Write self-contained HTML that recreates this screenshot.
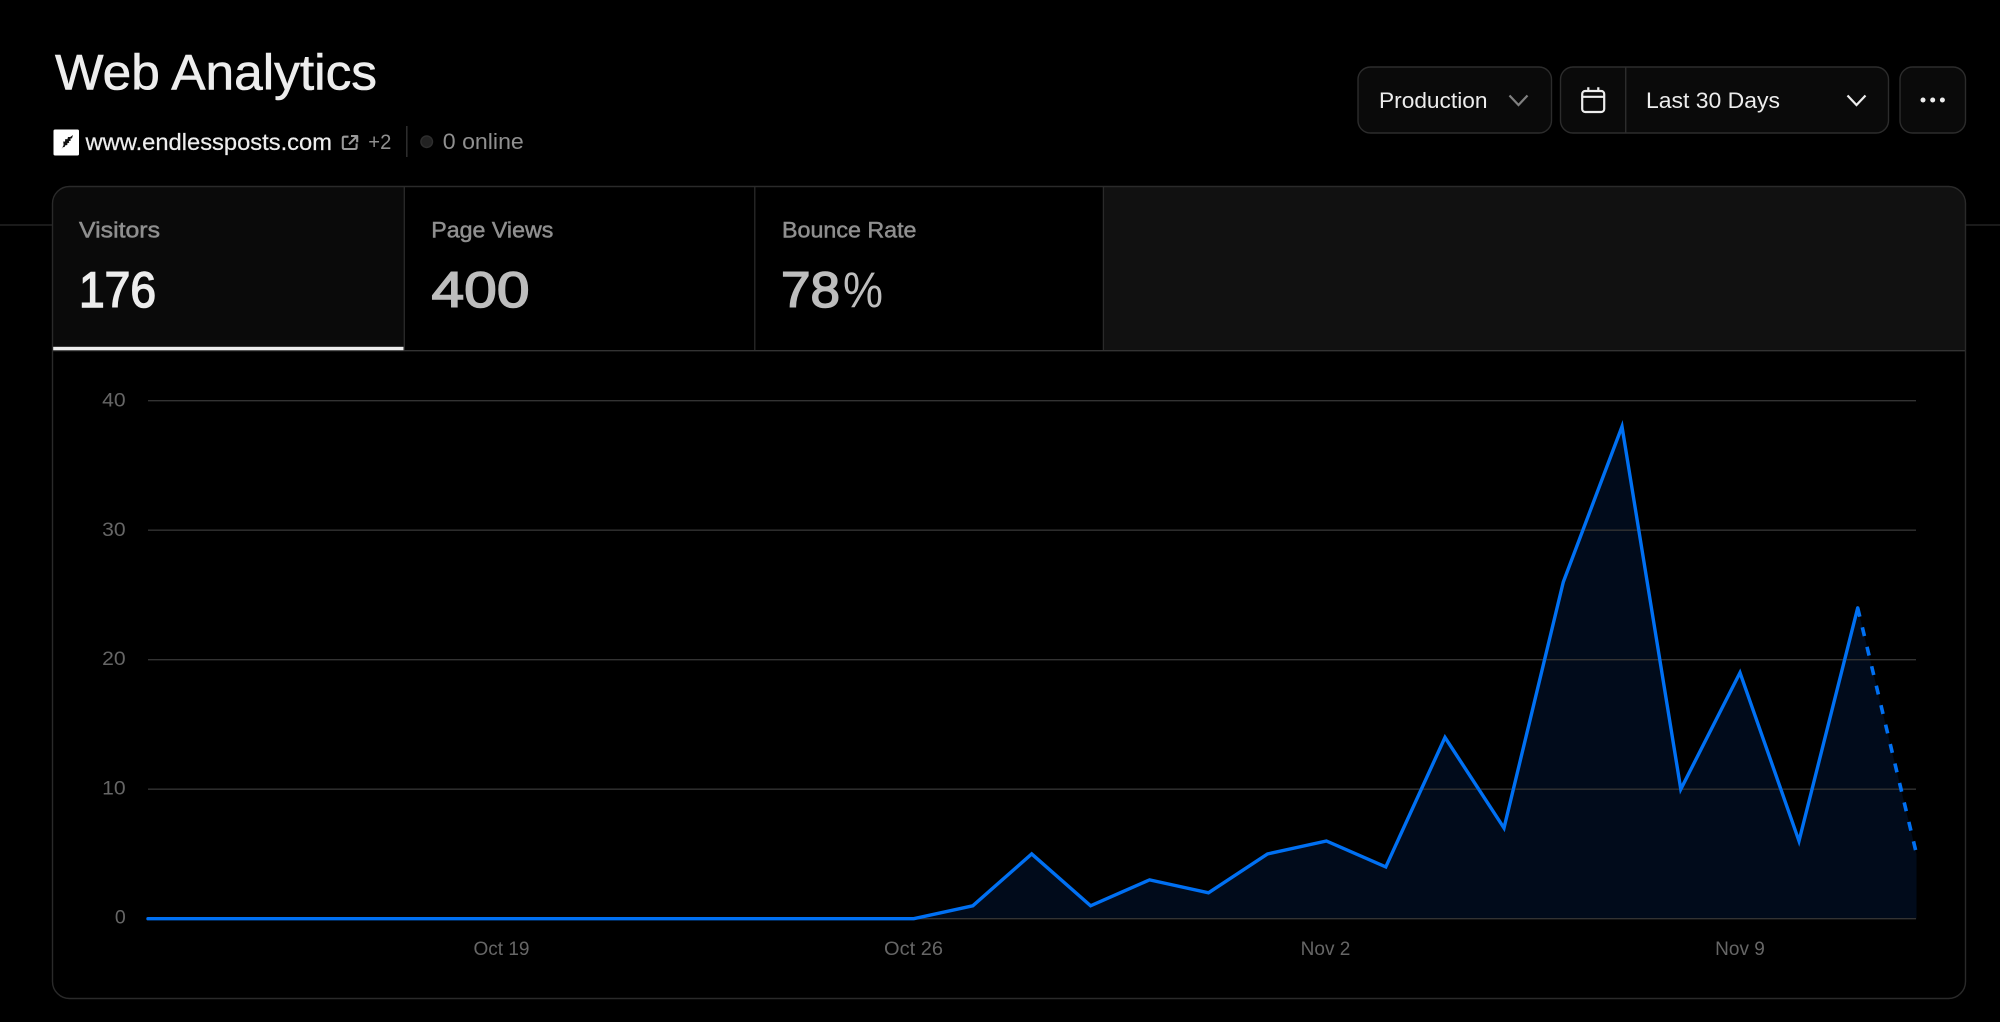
<!DOCTYPE html>
<html lang="en">
<head>
<meta charset="utf-8">
<title>Web Analytics</title>
<style>
html,body{margin:0;padding:0;background:#000;width:2000px;height:1022px;overflow:hidden}
svg{display:block}
text{font-family:"Liberation Sans",sans-serif}
</style>
</head>
<body>
<svg width="2000" height="1022" viewBox="0 0 2000 1022" xmlns="http://www.w3.org/2000/svg">
  <defs>
    <clipPath id="card"><rect x="52.5" y="186.5" width="1913" height="812" rx="17"/></clipPath>
  </defs>
  <rect width="2000" height="1022" fill="#000"/>

  <!-- header rule -->
  <line x1="0" y1="225" x2="2000" y2="225" stroke="#2a2a2a" stroke-width="1.3"/>

  <!-- title -->
  <text x="55" y="89.3" font-size="50" fill="#ededed" stroke="#ededed" stroke-width="0.6" textLength="322" lengthAdjust="spacingAndGlyphs">Web Analytics</text>

  <!-- favicon -->
  <rect x="53.5" y="129.5" width="25.5" height="26" rx="1.5" fill="#fff"/>
  <path d="M61.5 149.3 L63.6 145 L63.2 141.5 L65 141.6 L65.3 139 L67.4 139.3 L68 137 L70.2 137 L73 135 L72 138.2 L70.2 138.8 L71 140.4 L68.8 141.2 L69.3 142.8 L67.2 143.4 L67.4 145 L65.2 145.4 L64.6 147 L62.8 147.2 Z" fill="#111"/>

  <!-- domain -->
  <text x="85.5" y="150" font-size="23.5" fill="#ededed" stroke="#ededed" stroke-width="0.2" textLength="246.5" lengthAdjust="spacingAndGlyphs">www.endlessposts.com</text>
  <g fill="none" stroke="#999" stroke-width="2.1" stroke-linejoin="round">
    <path d="M348.5 136.7 H344.4 Q342.8 136.7 342.8 138.3 V147.4 Q342.8 149 344.4 149 H355 Q356.6 149 356.6 147.4 V143.5"/>
    <path d="M351 136 H357.2 V142.2 M357 136.2 L349 144.2"/>
  </g>
  <text x="368.3" y="149" font-size="21" fill="#8f8f8f" textLength="23" lengthAdjust="spacingAndGlyphs">+2</text>
  <line x1="406.8" y1="126" x2="406.8" y2="157" stroke="#2e2e2e" stroke-width="1.5"/>
  <circle cx="426.7" cy="141.7" r="5.8" fill="#222" stroke="#2e2e2e" stroke-width="1.4"/>
  <text x="442.8" y="149" font-size="22" fill="#8f8f8f" textLength="81" lengthAdjust="spacingAndGlyphs">0 online</text>

  <!-- Production select -->
  <rect x="1358" y="67" width="193.5" height="66" rx="12.5" fill="#0a0a0a" stroke="#2c2c2c" stroke-width="1.4"/>
  <text x="1379" y="108" font-size="22.5" fill="#ededed" textLength="108.5" lengthAdjust="spacingAndGlyphs">Production</text>
  <path d="M1509.5 95.5 L1518.5 105 L1527.5 95.5" fill="none" stroke="#808080" stroke-width="2.2"/>

  <!-- Date select -->
  <rect x="1560.5" y="67" width="328" height="66" rx="12.5" fill="#0a0a0a" stroke="#2c2c2c" stroke-width="1.4"/>
  <line x1="1625.7" y1="67.5" x2="1625.7" y2="132.5" stroke="#2c2c2c" stroke-width="1.4"/>
  <g fill="none" stroke="#ededed" stroke-width="2.2">
    <rect x="1582.2" y="91" width="22" height="21" rx="3"/>
    <path d="M1582.2 96.8 H1604.2 M1588.3 87.3 V91 M1598.3 87.3 V91"/>
  </g>
  <text x="1646" y="108" font-size="22.5" fill="#ededed" textLength="134" lengthAdjust="spacingAndGlyphs">Last 30 Days</text>
  <path d="M1847.5 95.5 L1856.5 105 L1865.5 95.5" fill="none" stroke="#ededed" stroke-width="2.2"/>

  <!-- More -->
  <rect x="1900" y="67" width="65.5" height="66" rx="12.5" fill="#0a0a0a" stroke="#2c2c2c" stroke-width="1.4"/>
  <circle cx="1923" cy="100" r="2.5" fill="#ededed"/>
  <circle cx="1932.7" cy="100" r="2.5" fill="#ededed"/>
  <circle cx="1942.4" cy="100" r="2.5" fill="#ededed"/>

  <!-- Card -->
  <rect x="52.5" y="186.5" width="1913" height="812" rx="17" fill="#000"/>
  <g clip-path="url(#card)">
    <rect x="52" y="186" width="352" height="165" fill="#0a0a0a"/>
    <rect x="1103.5" y="186" width="863" height="165" fill="#111"/>
    <line x1="404.3" y1="186" x2="404.3" y2="350" stroke="#2a2a2a" stroke-width="1.3"/>
    <line x1="754.8" y1="186" x2="754.8" y2="350" stroke="#2a2a2a" stroke-width="1.3"/>
    <line x1="1103.4" y1="186" x2="1103.4" y2="350" stroke="#2a2a2a" stroke-width="1.3"/>
    <line x1="52" y1="350.7" x2="1966" y2="350.7" stroke="#333" stroke-width="1.4"/>
    <rect x="53" y="346.8" width="350.5" height="3.4" fill="#ededed"/>
  </g>
  <rect x="52.5" y="186.5" width="1913" height="812" rx="17" fill="none" stroke="#2a2a2a" stroke-width="1.4"/>

  <!-- Tabs -->
  <g font-size="22.5" fill="#8f8f8f" stroke="#8f8f8f" stroke-width="0.5">
    <text x="79" y="237.7" textLength="81" lengthAdjust="spacingAndGlyphs">Visitors</text>
    <text x="431.3" y="237.7" textLength="122" lengthAdjust="spacingAndGlyphs">Page Views</text>
    <text x="782" y="237.7" textLength="134.5" lengthAdjust="spacingAndGlyphs">Bounce Rate</text>
  </g>
  <g font-size="50" stroke-width="1.5">
    <text x="79" y="306.8" fill="#ededed" stroke="#ededed" textLength="77" lengthAdjust="spacingAndGlyphs">176</text>
    <text x="431.5" y="306.8" fill="#bdbdbd" stroke="#bdbdbd" textLength="98" lengthAdjust="spacingAndGlyphs">400</text>
    <text x="781" y="306.8" fill="#bdbdbd" stroke="#bdbdbd" textLength="59" lengthAdjust="spacingAndGlyphs">78</text>
  </g>
  <text x="843" y="306.8" font-size="50" fill="#bdbdbd" textLength="40" lengthAdjust="spacingAndGlyphs">%</text>

  <!-- Area -->
  <path d="M913.8 918.7 L972.8 905.75 L1031.7 853.95 L1090.6 905.75 L1149.6 879.85 L1208.5 892.8 L1267.5 853.95 L1326.4 841 L1385.8 866.9 L1445 737.4 L1504 828.05 L1563.3 582 L1622 426.6 L1680.8 789.2 L1740 672.65 L1799 841 L1857.7 607.9 L1916.5 853.95 L1916.5 918.7 Z" fill="#010b1b"/>

  <!-- Grid -->
  <g stroke="#333" stroke-width="1.3">
    <line x1="148" y1="400.7" x2="1916" y2="400.7"/>
    <line x1="148" y1="530.2" x2="1916" y2="530.2"/>
    <line x1="148" y1="659.7" x2="1916" y2="659.7"/>
    <line x1="148" y1="789.2" x2="1916" y2="789.2"/>
    <line x1="148" y1="918.7" x2="1916" y2="918.7"/>
  </g>

  <!-- Axis labels -->
  <g font-size="19.5" fill="#666" text-anchor="end">
    <text x="125.7" y="406.7" textLength="23.5" lengthAdjust="spacingAndGlyphs">40</text>
    <text x="125.7" y="535.8" textLength="23.5" lengthAdjust="spacingAndGlyphs">30</text>
    <text x="125.7" y="665.2" textLength="23.5" lengthAdjust="spacingAndGlyphs">20</text>
    <text x="125.7" y="794.3" textLength="23.5" lengthAdjust="spacingAndGlyphs">10</text>
    <text x="125.7" y="923.7">0</text>
  </g>
  <g font-size="19" fill="#666" text-anchor="middle">
    <text x="501.5" y="955">Oct 19</text>
    <text x="913.5" y="955" textLength="59" lengthAdjust="spacingAndGlyphs">Oct 26</text>
    <text x="1325.5" y="955">Nov 2</text>
    <text x="1740" y="955">Nov 9</text>
  </g>

  <!-- Line -->
  <path d="M148 918.7 L913.8 918.7 L972.8 905.75 L1031.7 853.95 L1090.6 905.75 L1149.6 879.85 L1208.5 892.8 L1267.5 853.95 L1326.4 841 L1385.8 866.9 L1445 737.4 L1504 828.05 L1563.3 582 L1622 426.6 L1680.8 789.2 L1740 672.65 L1799 841 L1857.7 607.9" fill="none" stroke="#0070f3" stroke-width="3.4" stroke-linejoin="miter" stroke-miterlimit="10" stroke-linecap="round"/>
  <path d="M1857.7 607.9 L1916.5 853.95" fill="none" stroke="#0070f3" stroke-width="3.6" stroke-dasharray="9 11"/>
</svg>
</body>
</html>
